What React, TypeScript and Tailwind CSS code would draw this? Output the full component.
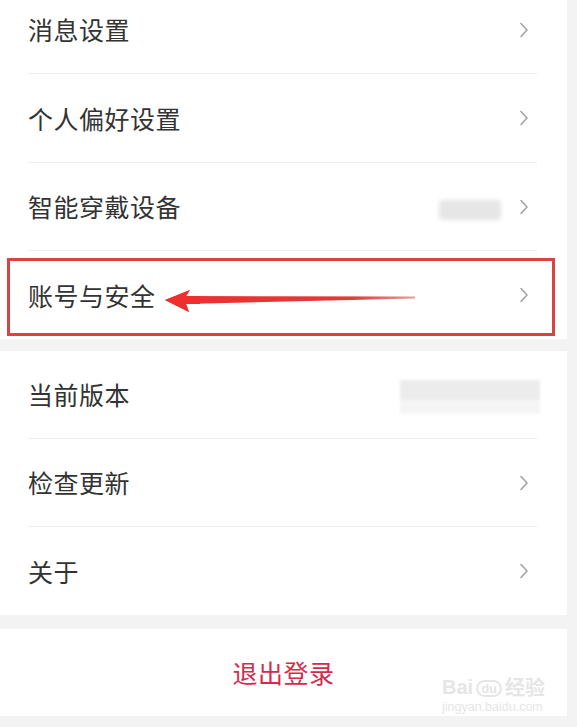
import React from "react";

const font = { fontFamily: '"Noto Sans CJK SC", "Noto Sans", sans-serif' };

function Chevron() {
  return (
    <svg width="10" height="16" viewBox="0 0 10 16" className="shrink-0">
      <path d="M2 1.5 L8 8 L2 14.5" fill="none" stroke="#a3a3a3" strokeWidth="1.6" strokeLinecap="round" strokeLinejoin="round" />
    </svg>
  );
}

function Row({
  label,
  chevron = true,
  last = false,
  extra,
  className = "",
  children,
}: {
  label: string;
  chevron?: boolean;
  last?: boolean;
  extra?: React.ReactNode;
  className?: string;
  children?: React.ReactNode;
}) {
  return (
    <div className={`relative h-[88px] ${className}`}>
      <div
        className={`ml-[28px] mr-[30px] h-full flex items-center justify-between pr-[8px] ${
          last ? "" : "border-b border-[#efefef]"
        }`}
      >
        <span className="text-[25px] leading-none text-[#333333] tracking-[0.5px]">{label}</span>
        <div className="flex items-center">
          {extra}
          {chevron && <Chevron />}
        </div>
      </div>
      {children}
    </div>
  );
}

export default function App() {
  return (
    <div className="w-[577px] h-[727px] overflow-hidden bg-[#f3f3f3]" style={font}>
      <div className="w-[567px] bg-white -mt-[14px]">
        <Row label="消息设置" />
        <Row label="个人偏好设置" className="h-[89px]" />
        <Row
          label="智能穿戴设备"
          extra={<div className="mr-[18px] mt-[6px] w-[62px] h-[20px] bg-[#e6e6e6] blur-[2px] rounded-sm" />}
        />
        <Row label="账号与安全" last>
          <div className="absolute left-[7px] right-[12px] top-[7px] bottom-[3px] border-[3px] border-[#d94442] pointer-events-none" />
          <svg className="absolute left-0 top-0 pointer-events-none" width="567" height="88" viewBox="0 0 567 88">
            <defs>
              <linearGradient id="shaft" x1="0" x2="1" y1="0" y2="0">
                <stop offset="0" stopColor="#ee2f2f" />
                <stop offset="0.75" stopColor="#e23a3a" />
                <stop offset="1" stopColor="#e8a0a0" />
              </linearGradient>
            </defs>
            <polygon
              points="165,49 190,39 186,45 415,45.5 415,47.5 186,53 189,61"
              fill="url(#shaft)"
            />
            <polygon points="165,49 190,39 186,45 200,45 200,53 186,53 189,61" fill="#ef2e2e" />
          </svg>
        </Row>
      </div>
      <div className="h-[12px]" />
      <div className="w-[567px] bg-white">
        <Row
          label="当前版本"
          chevron={false}
          className="h-[87px]"
          extra={
            <div className="-mr-[11px] mt-[4px] w-[140px] h-[34px] flex flex-col blur-[1.5px]">
              <div className="h-[20px] bg-[#ececec]" />
              <div className="h-[14px] bg-[#f5f5f5]" />
            </div>
          }
        />
        <Row label="检查更新" />
        <Row label="关于" last />
      </div>
      <div className="h-[14px]" />
      <div className="relative w-[567px] h-[87px] bg-white flex items-center justify-center">
        <span className="text-[25px] leading-none text-[#d62a4b] tracking-[0.5px]">退出登录</span>
        <div className="absolute left-[442px] top-[48px] flex flex-col items-start text-[#e6e6e6]">
          <div className="flex items-end leading-none">
            <span className="text-[20px] font-bold" style={{ fontFamily: '"Liberation Sans", sans-serif' }}>Bai</span>
            <span className="relative mx-[3px] text-[13px] font-bold border-2 border-[#e6e6e6] rounded-full px-[3px]" style={{ fontFamily: '"Liberation Sans", sans-serif' }}>du</span>
            <span className="text-[20px] font-bold">经验</span>
          </div>
          <span className="text-[12.5px] leading-none mt-[4px]" style={{ fontFamily: '"Liberation Sans", sans-serif' }}>jingyan.baidu.com</span>
        </div>
      </div>
    </div>
  );
}
